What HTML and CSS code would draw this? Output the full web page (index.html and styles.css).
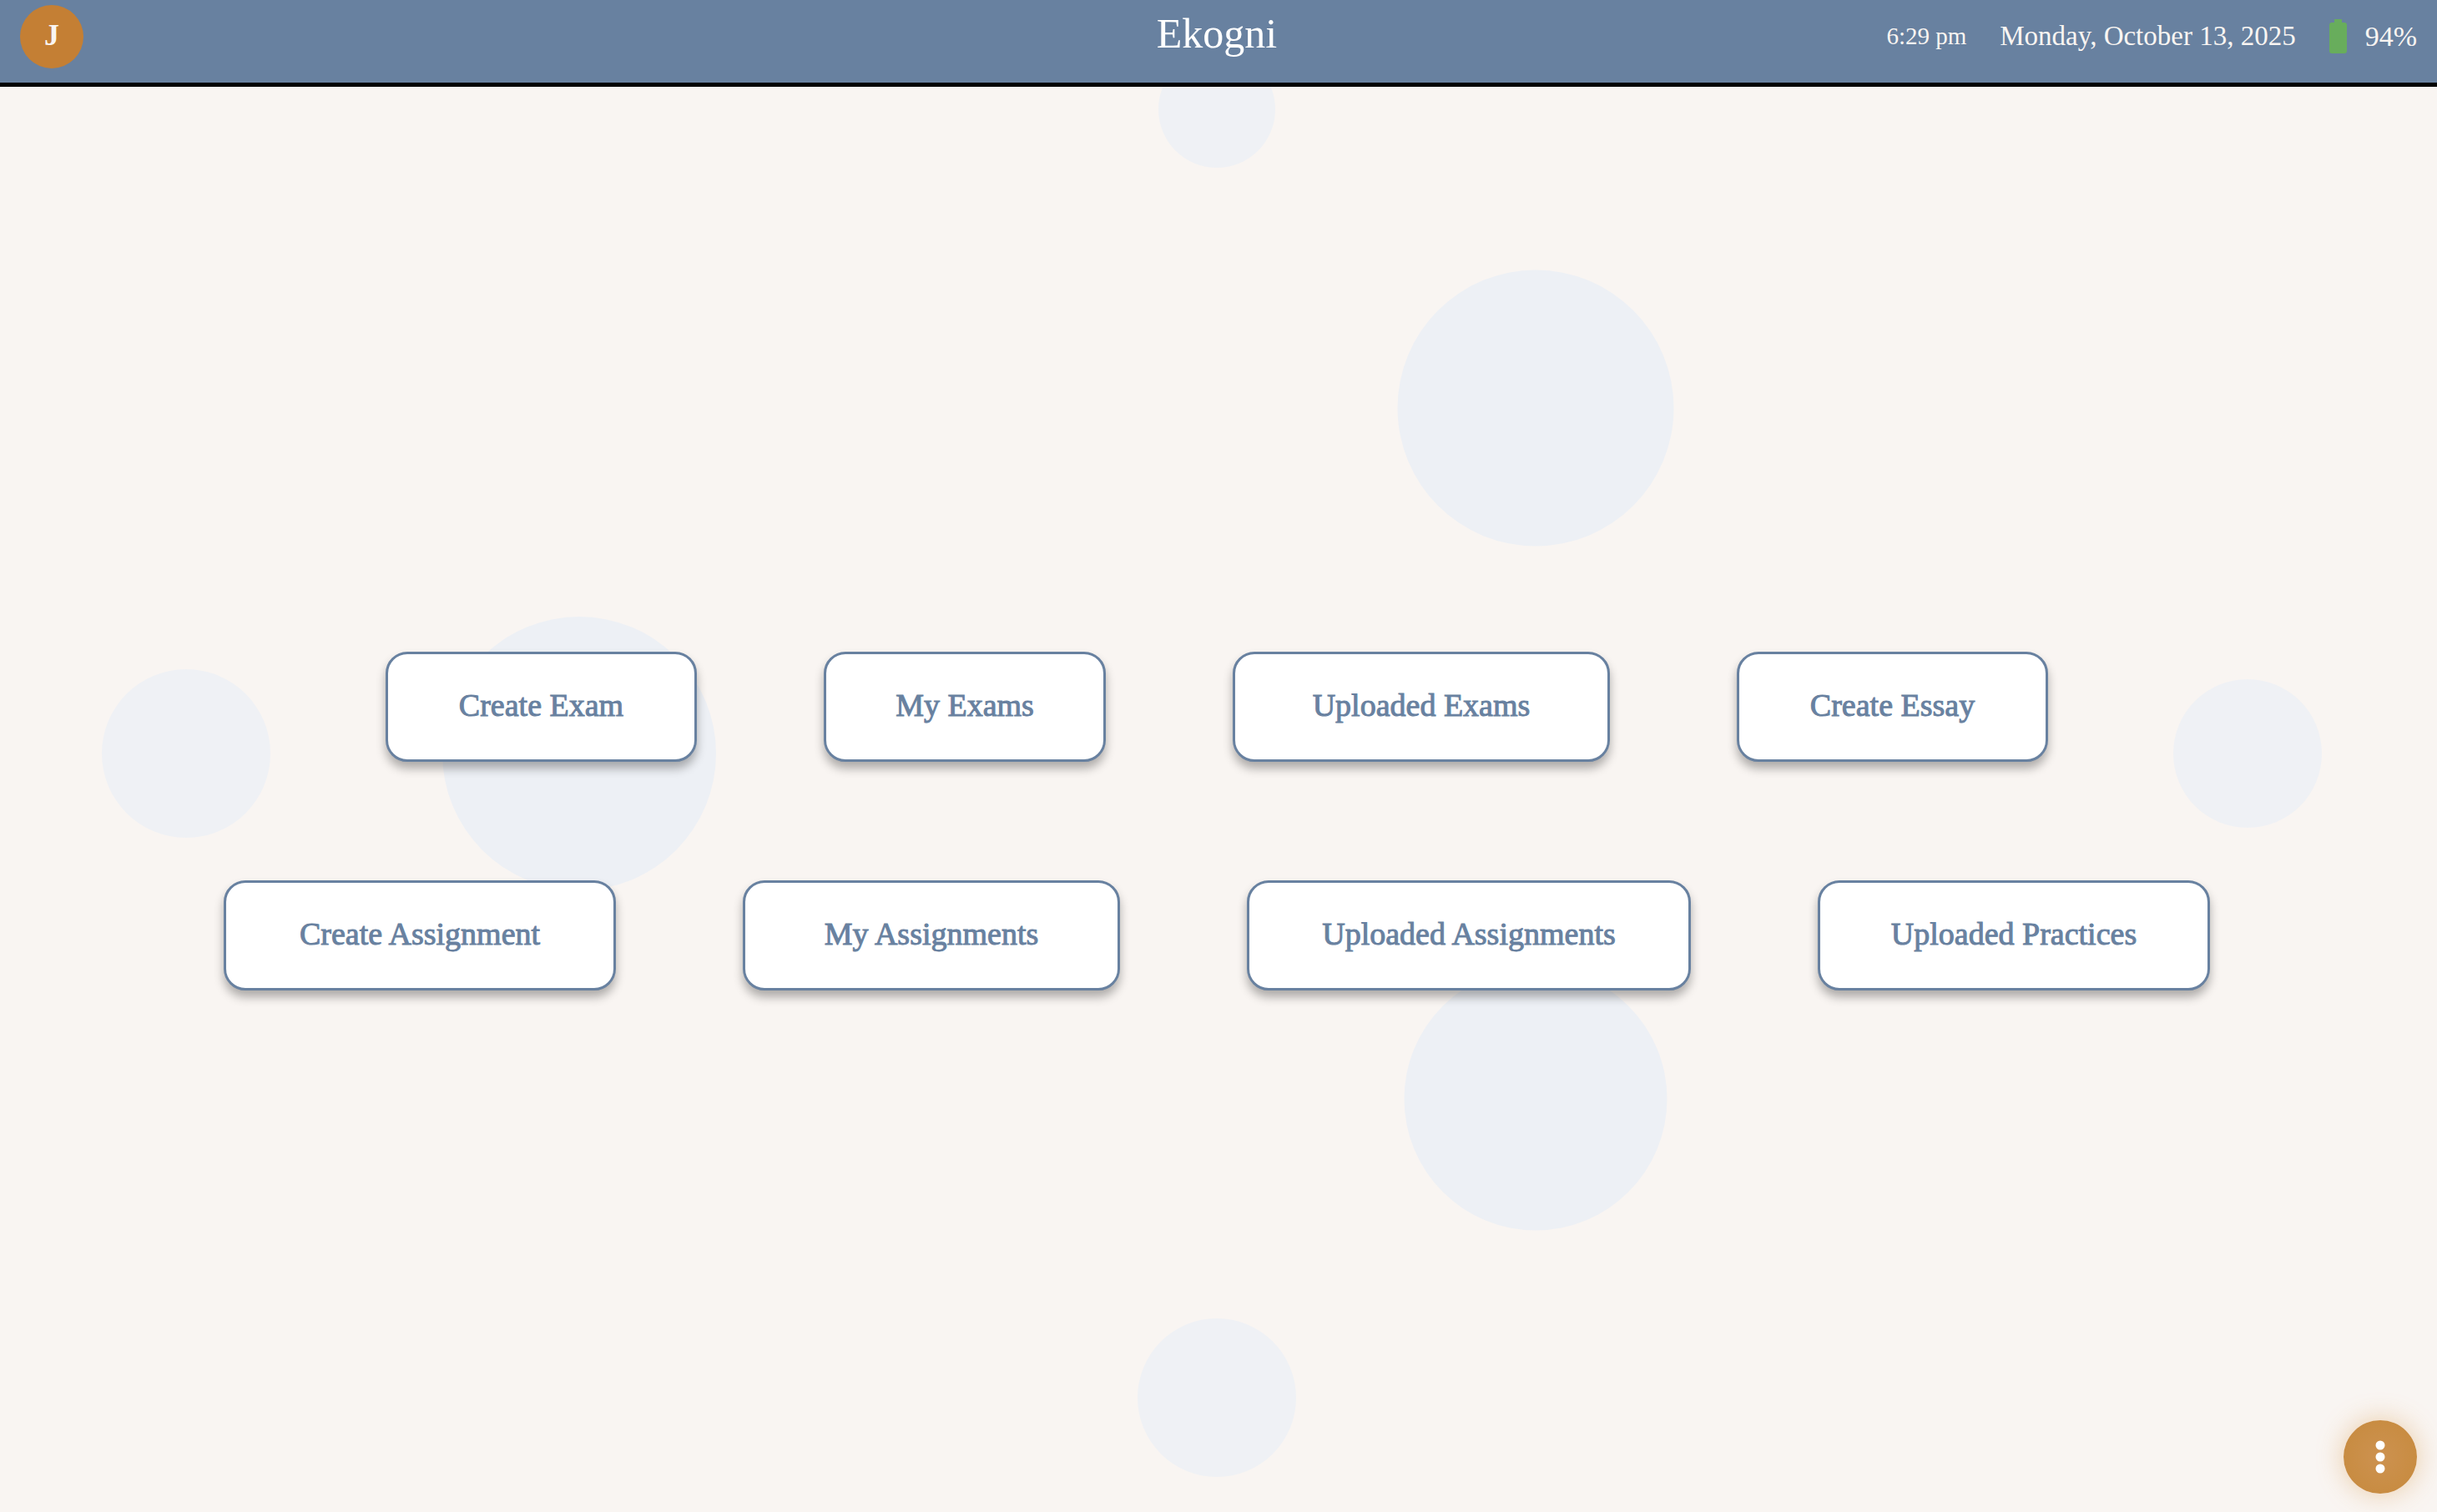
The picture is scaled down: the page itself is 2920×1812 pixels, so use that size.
FILE: index.html
```html
<!DOCTYPE html>
<html lang="en">
<head>
<meta charset="utf-8">
<title>Ekogni</title>
<link rel="stylesheet" href="styles.css">
</head>
<body>
<div class="bubbles" aria-hidden="true">
  <span class="bubble bubble-top"></span>
  <span class="bubble bubble-upper"></span>
  <span class="bubble bubble-center"></span>
  <span class="bubble bubble-left"></span>
  <span class="bubble bubble-right"></span>
  <span class="bubble bubble-lower"></span>
  <span class="bubble bubble-bottom"></span>
</div>
<header class="topbar">
  <div class="topbar-side"><button class="avatar" type="button">J</button></div>
  <h1 class="brand">Ekogni</h1>
  <div class="topbar-side status">
    <time class="clock">6:29 pm</time>
    <time class="date" datetime="2025-10-13">Monday, October 13, 2025</time>
    <span class="battery">
      <svg class="battery-icon" viewBox="0 0 21 41" aria-hidden="true"><path d="M6 0h9v4h3a3 3 0 0 1 3 3v31a3 3 0 0 1-3 3H3a3 3 0 0 1-3-3V7a3 3 0 0 1 3-3h3z"/></svg>
      94%
    </span>
  </div>
</header>
<main class="menu">
  <nav class="menu-row">
    <button class="tile tile-m" type="button">Create Exam</button>
    <button class="tile tile-s" type="button">My Exams</button>
    <button class="tile tile-l" type="button">Uploaded Exams</button>
    <button class="tile tile-m" type="button">Create Essay</button>
  </nav>
  <nav class="menu-row">
    <button class="tile tile-xl" type="button">Create Assignment</button>
    <button class="tile tile-l" type="button">My Assignments</button>
    <button class="tile tile-xxl" type="button">Uploaded Assignments</button>
    <button class="tile tile-xl" type="button">Uploaded Practices</button>
  </nav>
</main>
<button class="fab" type="button" aria-label="More options">
  <svg class="fab-icon" viewBox="0 0 12 40" aria-hidden="true"><circle cx="6" cy="6" r="5.5"/><circle cx="6" cy="20" r="5.5"/><circle cx="6" cy="34" r="5.5"/></svg>
</button>
</body>
</html>
```
FILE: styles.css
```css
* { box-sizing: border-box; }

body {
  margin: 0;
  min-height: 100vh;
  display: flex;
  flex-direction: column;
  background: #f9f5f2;
  font-family: "Liberation Serif", serif;
}

button { font-family: inherit; cursor: pointer; }

.topbar {
  display: grid;
  grid-template-columns: 1fr auto 1fr;
  align-items: center;
  height: 104px;
  padding: 0 24px 12px 24px;
  background: #6881a0;
  border-bottom: 5px solid #000;
  color: #f9f5f2;
  z-index: 1;
}

.topbar-side { display: flex; align-items: center; }

.avatar {
  width: 76px;
  height: 76px;
  padding: 0 0 4px;
  border: 0;
  border-radius: 50%;
  background: #c47f34;
  color: #f9f5f2;
  font-size: 36px;
  font-weight: 700;
}

.brand {
  margin: 0;
  padding: 0 4px 8px 0;
  color: #fff;
  font-size: 50px;
  font-weight: 400;
  line-height: 56px;
}

.status { justify-content: flex-end; gap: 40px; white-space: nowrap; }
.clock { font-size: 29px; }
.date { font-size: 33px; }
.battery { display: flex; align-items: center; gap: 22px; font-size: 34px; }
.battery-icon { width: 21px; height: 41px; fill: #68ad5c; }

.bubbles {
  position: absolute;
  inset: 0;
  overflow: hidden;
  z-index: -1;
}

.bubble {
  position: absolute;
  border-radius: 50%;
  aspect-ratio: 1;
  transform: translate(-50%, -50%);
  background: #edf0f5;
}

.bubble-top { left: calc(50% - 2px); top: 131px; width: 140px; background: #eff1f5; }
.bubble-upper { left: 63%; top: 489px; width: 331px; }
.bubble-center { left: 694px; top: 903px; width: 328px; }
.bubble-left { left: 223px; top: 903px; width: 202px; background: #eff1f5; }
.bubble-right { left: 2693px; top: 903px; width: 178px; background: #eff1f5; }
.bubble-lower { left: 63%; top: 1317px; width: 315px; }
.bubble-bottom { left: calc(50% - 2px); top: 1675px; width: 190px; background: #eff1f5; }

.menu {
  flex: 1;
  display: flex;
  flex-direction: column;
  justify-content: center;
  gap: 142px;
  padding: 52px 4px 0 0;
}

.menu-row { display: flex; justify-content: center; gap: 152px; }

.tile {
  height: 132px;
  padding: 0 72px 4px;
  border: 3px solid #6881a0;
  border-radius: 26px;
  background: #fff;
  box-shadow: 0 8px 12px rgba(0, 0, 0, 0.3);
  color: #6881a0;
  font-size: 38px;
  white-space: nowrap;
  -webkit-text-stroke: 1px currentColor;
}

.tile-s { min-width: 338px; }
.tile-m { min-width: 373px; }
.tile-l { min-width: 452px; }
.tile-xl { min-width: 470px; }
.tile-xxl { min-width: 532px; }

.fab {
  position: fixed;
  right: 24px;
  bottom: 22px;
  display: flex;
  align-items: center;
  justify-content: center;
  width: 88px;
  height: 88px;
  padding: 0;
  border: 0;
  border-radius: 50%;
  background: radial-gradient(circle, #cd9250, #c88c42 70%);
  box-shadow: 0 0 32px rgba(214, 140, 50, 0.4);
}

.fab-icon { width: 12px; height: 40px; fill: #fff; }
```
